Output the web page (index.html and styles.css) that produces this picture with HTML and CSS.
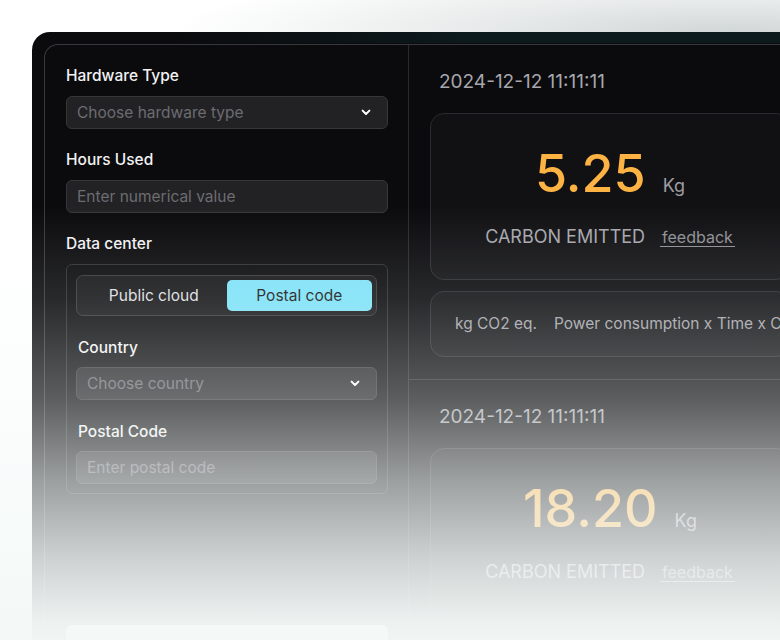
FILE: index.html
```html
<!DOCTYPE html>
<html lang="en">
<head>
<meta charset="utf-8">
<title>Carbon calculator</title>
<link rel="stylesheet" href="styles.css">
</head>
<body>
<div class="page">
  <div class="device">
    <div class="screen">
      <aside class="form">
        <div class="field">
          <div class="label">Hardware Type</div>
          <div class="control">
            <span class="ph">Choose hardware type</span>
            <svg class="chev" width="10" height="7" viewBox="0 0 10 7"><path d="M1.6 1.6 L5 5 L8.4 1.6" fill="none" stroke="#ffffff" stroke-width="2" stroke-linecap="round" stroke-linejoin="round"/></svg>
          </div>
        </div>
        <div class="field">
          <div class="label">Hours Used</div>
          <div class="control"><span class="ph">Enter numerical value</span></div>
        </div>
        <div class="field">
          <div class="label">Data center</div>
          <div class="dc-box">
            <div class="segment">
              <div class="seg">Public cloud</div>
              <div class="seg active">Postal code</div>
            </div>
            <div class="subfield">
              <div class="label sub">Country</div>
              <div class="control">
                <span class="ph">Choose country</span>
                <svg class="chev" width="10" height="7" viewBox="0 0 10 7"><path d="M1.6 1.6 L5 5 L8.4 1.6" fill="none" stroke="#ffffff" stroke-width="2" stroke-linecap="round" stroke-linejoin="round"/></svg>
              </div>
            </div>
            <div class="subfield">
              <div class="label sub">Postal Code</div>
              <div class="control"><span class="ph">Enter postal code</span></div>
            </div>
          </div>
        </div>
        <div class="submit"></div>
      </aside>
      <main class="results">
        <section class="record">
          <div class="date">2024-12-12 11:11:11</div>
          <div class="card result">
            <div class="amount"><span class="num">5.25</span><span class="unit">Kg</span></div>
            <div class="caption"><span class="cap">CARBON EMITTED</span><span class="feedback">feedback</span></div>
          </div>
          <div class="card formula"><span>kg CO2 eq.</span><span>Power consumption x Time x Carbon intensity</span></div>
        </section>
        <section class="record">
          <div class="date">2024-12-12 11:11:11</div>
          <div class="card result">
            <div class="amount"><span class="num">18.20</span><span class="unit">Kg</span></div>
            <div class="caption"><span class="cap">CARBON EMITTED</span><span class="feedback">feedback</span></div>
          </div>
        </section>
      </main>
    </div>
  </div>
  <div class="fade"></div>
</div>
</body>
</html>
```

FILE: styles.css
```css
html, body {
  margin: 0;
  padding: 0;
  width: 780px;
  height: 640px;
  overflow: hidden;
}

body {
  font-family: Inter, "Noto Sans", "Liberation Sans", sans-serif;
  background:
    radial-gradient(ellipse 560px 72px at 730px 34px, rgba(208,213,213,1) 0%, rgba(222,226,226,0.7) 45%, rgba(255,255,255,0) 100%),
    #ffffff;
}

.page {
  position: relative;
  width: 780px;
  height: 640px;
  padding: 32px 0 0 32px;
  box-sizing: border-box;
}

.device {
  width: 791px;
  height: 640px;
  box-sizing: border-box;
  padding: 12px 12px 0 12px;
  border-radius: 18px 18px 0 0;
  background:
    linear-gradient(90deg, #0b0b0d 18%, rgba(11,11,13,0) 55%),
    linear-gradient(#0c191d 0, #0c191d 11px, #0b0b0d 11px);
}

.screen {
  display: grid;
  grid-template-columns: 364px 402px;
  height: 100%;
  border: 1px solid #38393d;
  border-bottom: none;
  border-right: none;
  border-radius: 14px 0 0 0;
  background: #0b0b0d;
  overflow: hidden;
}

/* ---------- form ---------- */
.form {
  box-sizing: border-box;
  border-right: 1px solid #2a2a2d;
  padding: 21px 20px 0 21px;
  display: flex;
  flex-direction: column;
}

.field + .field {
  margin-top: 21px;
}

.label {
  font-size: 15.5px;
  line-height: 20px;
  font-weight: 500;
  color: #f2f2f3;
  margin-bottom: 10px;
}

.label.sub {
  margin-bottom: 9px;
  padding-left: 2px;
}

.control {
  height: 33px;
  box-sizing: border-box;
  border: 1px solid #37373a;
  background: #222225;
  border-radius: 6px;
  padding: 0 16px 0 10px;
  display: flex;
  align-items: center;
  justify-content: space-between;
}

.ph {
  font-size: 15.5px;
  color: #6c6c71;
}

.chev {
  display: block;
}

.dc-box {
  border: 1px solid #2e2e31;
  border-radius: 6px;
  padding: 10px 10px 9px 9px;
}

.segment {
  display: grid;
  grid-template-columns: 1fr 1fr;
  padding: 4px;
  border: 1px solid #37373a;
  background: #161618;
  border-radius: 7px;
}

.seg {
  height: 31px;
  display: flex;
  align-items: center;
  justify-content: center;
  font-size: 15.5px;
  color: #dedee0;
  border-radius: 5px;
}

.seg.active {
  background: #7ee2f8;
  color: #17191b;
}

.subfield {
  margin-top: 22px;
}

.submit {
  margin-top: 131px;
  height: 40px;
  border-radius: 6px;
  background: #ffffff;
}

/* ---------- results ---------- */
.results {
  display: flex;
  flex-direction: column;
}

.record {
  padding: 25px 21px 22px 21px;
  border-bottom: 1px solid #2c2c2f;
}

.date {
  font-size: 19px;
  line-height: 24px;
  color: #a7a7ad;
  padding-left: 9px;
  margin-bottom: 19px;
}

.card {
  border: 1px solid #2b2b2f;
  background: #111114;
  border-radius: 14px;
}

.result {
  padding: 28px 0 32px 0;
}

.amount {
  display: flex;
  justify-content: center;
  align-items: baseline;
  gap: 17px;
  height: 64px;
}

.num {
  font-size: 52px;
  line-height: 64px;
  font-weight: 500;
  color: #fdb344;
}

.unit {
  font-size: 18px;
  color: #9d9da3;
}

.caption {
  margin-top: 21px;
  display: flex;
  justify-content: center;
  align-items: baseline;
  gap: 15px;
  line-height: 20px;
}

.cap {
  font-size: 18px;
  color: #a6a6ac;
}

.feedback {
  font-size: 16px;
  line-height: 18px;
  color: #8f8f95;
  border-bottom: 1px solid #8f8f95;
  padding: 0 2px;
}

.formula {
  margin-top: 11px;
  padding: 22px 24px;
  display: flex;
  gap: 17px;
  font-size: 15.5px;
  line-height: 20px;
  color: #a3a3a9;
  white-space: nowrap;
  overflow: hidden;
}

/* ---------- fade overlay ---------- */
.fade {
  position: absolute;
  left: 0;
  top: 0;
  width: 780px;
  height: 640px;
  pointer-events: none;
  background: linear-gradient(to bottom,
    rgba(244,249,248,0) 0px,
    rgba(244,249,248,0) 205px,
    rgba(244,249,248,0.13) 300px,
    rgba(244,249,248,0.35) 400px,
    rgba(244,249,248,0.62) 480px,
    rgba(244,249,248,0.84) 560px,
    rgba(244,249,248,0.97) 622px,
    rgba(244,249,248,0.985) 640px);
}
```
